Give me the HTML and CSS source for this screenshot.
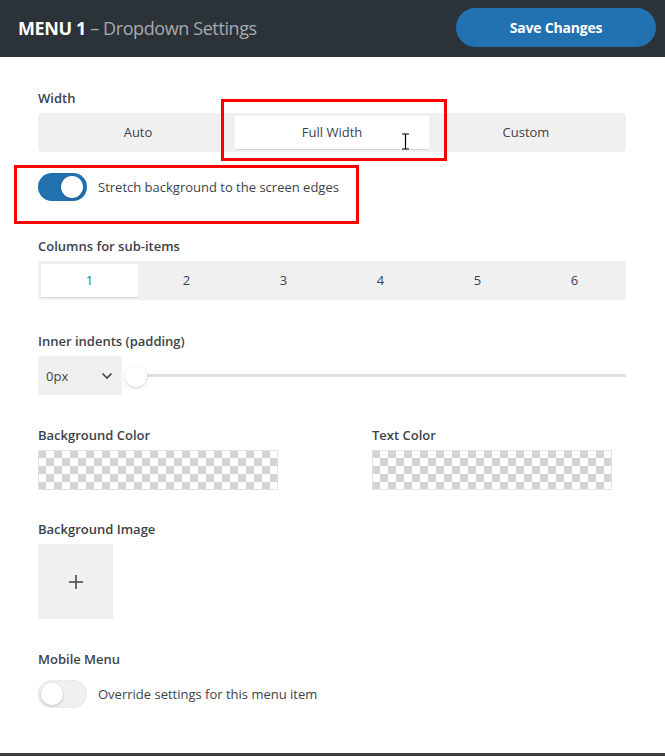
FILE: index.html
```html
<!DOCTYPE html>
<html lang="en">
<head>
    <meta charset="UTF-8">
    <meta name="viewport" content="width=device-width, initial-scale=1.0">
    <title>MENU 1 - Dropdown Settings</title>
    <link rel="stylesheet" href="styles.css">
</head>
<body>

<div class="panel">
    <!-- Header -->
    <header class="panel-head">
        <h1 class="panel-title"><b>MENU 1</b> – Dropdown Settings</h1>
        <button class="save-btn">Save Changes</button>
    </header>

    <!-- Settings -->
    <div class="panel-body">
        <div class="field field-width">
            <div class="field-label">Width</div>
            <div class="segmented seg-3">
                <span class="seg-item">Auto</span>
                <span class="seg-item active">Full Width</span>
                <span class="seg-item">Custom</span>
            </div>
            <label class="toggle-row stretch-row">
                <span class="toggle on"><span class="knob"></span></span>
                Stretch background to the screen edges
            </label>
        </div>

        <div class="field field-columns">
            <div class="field-label">Columns for sub-items</div>
            <div class="segmented seg-6">
                <span class="seg-item active blue">1</span>
                <span class="seg-item">2</span>
                <span class="seg-item">3</span>
                <span class="seg-item">4</span>
                <span class="seg-item">5</span>
                <span class="seg-item">6</span>
            </div>
        </div>

        <div class="field">
            <div class="field-label">Inner indents (padding)</div>
            <div class="range-row">
                <div class="select-box">
                    <span>0px</span>
                    <svg width="12" height="8" viewBox="0 0 12 8"><path d="M1.5 1.5 L6 6 L10.5 1.5" fill="none" stroke="#3c434a" stroke-width="1.6"/></svg>
                </div>
                <span class="thumb"></span>
                <span class="track"></span>
            </div>
        </div>

        <div class="field color-grid">
            <div>
                <div class="field-label">Background Color</div>
                <div class="swatch"></div>
            </div>
            <div>
                <div class="field-label">Text Color</div>
                <div class="swatch"></div>
            </div>
        </div>

        <div class="field">
            <div class="field-label">Background Image</div>
            <div class="image-add">
                <svg width="16" height="16" viewBox="0 0 16 16"><path d="M8 1 V15 M1 8 H15" stroke="#3c434a" stroke-width="1.5"/></svg>
            </div>
        </div>

        <div class="field">
            <div class="field-label mobile-label">Mobile Menu</div>
            <label class="toggle-row">
                <span class="toggle"><span class="knob"></span></span>
                Override settings for this menu item
            </label>
        </div>
    </div>

    <div class="panel-foot"></div>

    <!-- Annotation marks over the screenshot -->
    <div class="mark mark-width"></div>
    <div class="mark mark-stretch"></div>
    <svg class="text-cursor" width="9" height="17" viewBox="0 0 9 17">
        <path d="M1 1 H8 M4.5 1 V16 M1 16 H8" stroke="#000" stroke-width="1.2" fill="none"/>
    </svg>
</div>

</body>
</html>
```

FILE: styles.css
```css
* {
    box-sizing: border-box;
}
body {
    margin: 0;
    background: #fff;
    font-family: "Open Sans", "Noto Sans", sans-serif;
    color: #3c434a;
}
.panel {
    position: relative;
    min-height: 756px;
    display: flex;
    flex-direction: column;
}
/* Header */
.panel-head {
    height: 57px;
    background: #2c3338;
    display: flex;
    align-items: center;
    justify-content: space-between;
    padding: 0 9px 0 18px;
}
.panel-title {
    margin: 0 0 2px;
    font-size: 18px;
    font-weight: 400;
    color: #a7aaad;
    letter-spacing: -0.4px;
}
.panel-title b {
    color: #fff;
    font-weight: 700;
}
.save-btn {
    width: 200px;
    height: 39px;
    border: none;
    border-radius: 20px;
    background: #2271b1;
    color: #fff;
    font-family: inherit;
    font-size: 14px;
    font-weight: 700;
    letter-spacing: -0.2px;
    margin-bottom: 3px;
}
/* Body */
.panel-body {
    flex: 1;
    padding: 32px 39px 0 38px;
}
.field {
    margin-bottom: 31px;
}
.field-width {
    margin-bottom: 36px;
}
.field-columns {
    margin-bottom: 32px;
}
.field-label {
    font-size: 13px;
    font-weight: 600;
    line-height: 18px;
    margin-bottom: 6px;
}
.mobile-label {
    margin-bottom: 12px;
}
/* Segmented control */
.segmented {
    display: grid;
    padding: 3px;
    background: #f0f0f0;
    border-radius: 4px;
}
.seg-3 {
    grid-template-columns: repeat(3, 1fr);
}
.seg-6 {
    grid-template-columns: repeat(6, 1fr);
}
.seg-item {
    height: 33px;
    line-height: 33px;
    text-align: center;
    font-size: 13px;
}
.seg-item.active {
    background: #fff;
    box-shadow: 0 1px 0 #d6d6d6;
}
.seg-item.blue {
    color: #2271b1;
}
/* Toggle */
.toggle-row {
    display: flex;
    align-items: center;
    gap: 11px;
    font-size: 13px;
}
.stretch-row {
    margin-top: 21px;
}
.toggle {
    width: 49px;
    height: 28px;
    border-radius: 14px;
    background: #f0f0f0;
    padding: 3px;
    display: flex;
    box-shadow: inset 0 0 2px rgba(0,0,0,0.08);
}
.toggle.on {
    background: #2271b1;
    justify-content: flex-end;
    padding-right: 4px;
}
.knob {
    width: 22px;
    height: 22px;
    border-radius: 50%;
    background: #fff;
    box-shadow: 0 1px 3px rgba(0,0,0,0.2);
}
/* Padding select + slider */
.range-row {
    display: flex;
    align-items: center;
}
.select-box {
    width: 84px;
    height: 39px;
    background: #f0f0f0;
    border-radius: 4px;
    display: flex;
    align-items: center;
    justify-content: space-between;
    padding: 0 9px 0 8px;
    font-size: 13px;
}
.thumb {
    width: 22px;
    height: 22px;
    border-radius: 50%;
    background: #fff;
    box-shadow: 0 1px 3px rgba(0,0,0,0.2);
    margin-left: 3px;
    position: relative;
    z-index: 1;
}
.track {
    flex: 1;
    height: 3px;
    background: #e0e0e0;
    margin-left: -2px;
}
/* Colors */
.color-grid {
    display: grid;
    grid-template-columns: 1fr 1fr;
    column-gap: 80px;
    margin-bottom: 30px;
}
.swatch {
    width: 240px;
    height: 40px;
    border: 1px solid #e2e2e2;
    background-color: #fff;
    background-image:
        linear-gradient(45deg, #d4d4d4 25%, transparent 25%, transparent 75%, #d4d4d4 75%),
        linear-gradient(45deg, #d4d4d4 25%, transparent 25%, transparent 75%, #d4d4d4 75%);
    background-size: 16px 16px;
    background-position: 7px -1px, -1px 7px;
}
/* Image */
.image-add {
    width: 75px;
    height: 75px;
    background: #f0f0f0;
    display: flex;
    align-items: center;
    justify-content: center;
}
.panel-foot {
    height: 3px;
    background: #3c3c3c;
}
/* Red annotation boxes */
.mark {
    position: absolute;
    border: 3px solid #f00;
}
.mark-width {
    left: 221px;
    top: 99px;
    width: 226px;
    height: 62px;
}
.mark-stretch {
    left: 14px;
    top: 165px;
    width: 345px;
    height: 59px;
}
.text-cursor {
    position: absolute;
    left: 401px;
    top: 133px;
}
```
